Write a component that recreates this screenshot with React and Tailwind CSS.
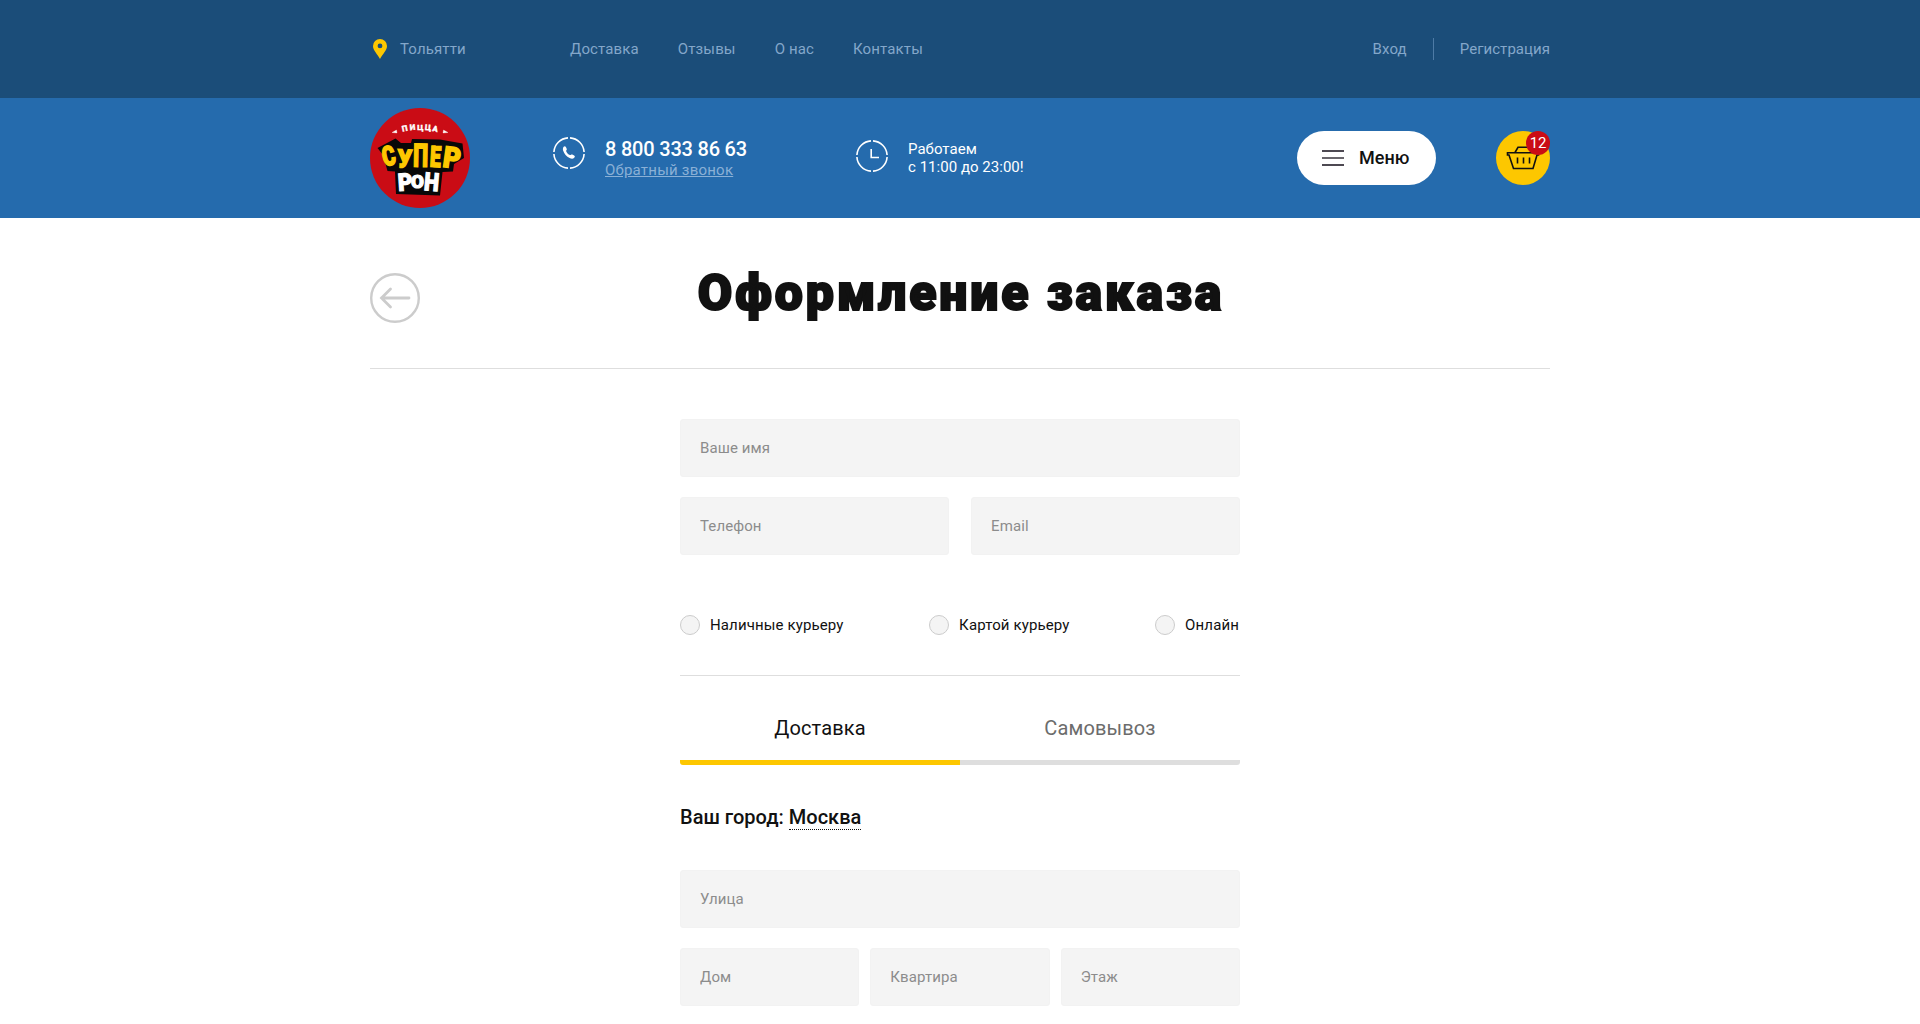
const navLinks = ["Доставка", "Отзывы", "О нас", "Контакты"];
const payments = ["Наличные курьеру", "Картой курьеру", "Онлайн"];

const superLetters = [
  { c: "С", x: 14.5, y: 58.5, s: 27, w: 13, r: -13 },
  { c: "У", x: 27, y: 59, s: 25, w: 14.5, r: 3 },
  { c: "П", x: 43, y: 58.5, s: 32, w: 15, r: 1 },
  { c: "Е", x: 59.5, y: 58.5, s: 29, w: 11, r: 3 },
  { c: "Р", x: 72, y: 58.5, s: 29, w: 17.5, r: 8 },
];

const ronLetters = [
  { c: "Р", x: 28.5, y: 83, s: 24, w: 14.5, r: -4 },
  { c: "О", x: 41, y: 79.5, s: 19, w: 13, r: 0 },
  { c: "Н", x: 53.5, y: 82, s: 25, w: 15, r: 5 },
];

function Letters({ items }) {
  return items.map((l) => (
    <text key={l.c} fontSize={l.s} textLength={l.w} lengthAdjust="spacingAndGlyphs" transform={`translate(${l.x} ${l.y}) rotate(${l.r})`}>
      {l.c}
    </text>
  ));
}

function Logo() {
  return (
    <svg viewBox="0 0 100 100" className="h-[100px] w-[100px] shrink-0" fontFamily="Roboto, sans-serif" fontWeight="900" strokeLinejoin="miter">
      <circle cx="50" cy="50" r="50" fill="#ca0c15" />
      <path
        d="M7.500 40 25.500 30.500 31 35 41 35 42 31 70 31.500 92.500 35.500 94 50 84 56 83 63.500 72.500 64 70 87.500 26 86 25 63.500 17.500 63 13 47Z"
        fill="#080808"
      />
      <g fill="#fff" stroke="#fff" strokeWidth=".3" fontSize="8">
        <text transform="translate(32.500 23.800) rotate(-12)">П</text>
        <text transform="translate(40 22.300) rotate(-5)">И</text>
        <text transform="translate(47.300 21.900)">Ц</text>
        <text transform="translate(54.800 21.900) rotate(5)">Ц</text>
        <text transform="translate(62 22.900) rotate(12)">А</text>
        <path d="m22 24.500 4.500-2.500.5 3Zm56 0-4.500-2.500-.5 3Z" />
      </g>
      <g fill="#fdc700" stroke="#fdc700" strokeWidth="1.6">
        <Letters items={superLetters} />
      </g>
      <g fill="#fff" stroke="#fff" strokeWidth="1.2">
        <Letters items={ronLetters} />
      </g>
    </svg>
  );
}

function Ring({ children, className }) {
  return (
    <svg viewBox="0 0 32 32" fill="none" stroke="#fff" strokeWidth="1.6" className={className}>
      <path d="M17 .9a15.100 15.100 0 0 1 14.100 14.100M31.100 17A15.100 15.100 0 0 1 17 31.100M15 31.100A15.100 15.100 0 0 1 .9 17M.9 15A15.100 15.100 0 0 1 15 .9" />
      {children}
    </svg>
  );
}

function Field({ label }) {
  return (
    <input
      placeholder={label}
      className="block h-[58px] w-full min-w-0 rounded-[3px] border border-[#f2f2f2] bg-[#f4f4f4] px-[19px] text-[15px] tracking-[0.1px] placeholder:text-[#8c8c8c]"
    />
  );
}

export default function App() {
  return (
    <div className="h-[1024px] overflow-hidden bg-white font-[Roboto,sans-serif] text-[15px] leading-[18px] tracking-[0.13px] text-[#111]">
      <div className="h-[98px] bg-[#1b4d79]">
        <div className="mx-auto flex h-full w-[1180px] items-center text-[#84a7ca]">
          <svg viewBox="0 0 14 20" className="ml-[3px] h-5 w-[14px]" fill="#fdc700">
            <path fillRule="evenodd" d="M7 0a7 7 0 0 0-7 7c0 4.500 4.500 8 7 13 2.500-5 7-8.500 7-13a7 7 0 0 0-7-7Zm0 4.500a2.400 2.400 0 1 1 0 4.800 2.400 2.400 0 0 1 0-4.800Z" />
          </svg>
          <span className="ml-[13px] w-[170px]">Тольятти</span>
          <nav className="flex gap-[39px]">
            {navLinks.map((n) => (
              <a key={n}>{n}</a>
            ))}
          </nav>
          <div className="ml-auto flex items-center">
            <a>Вход</a>
            <span className="mr-[26px] ml-[26px] h-[22px] w-px bg-[#4e7ba6]" />
            <a className="tracking-[0.05px]">Регистрация</a>
          </div>
        </div>
      </div>

      <header className="h-[120px] bg-[#256bad]">
        <div className="mx-auto flex h-full w-[1180px] items-center text-white">
          <Logo />
          <Ring className="mb-[10px] ml-[83px] h-8 w-8">
            <path d="M10.700 9.800c.8-1 1.800-.6 2.300.4l.7 1.600c.5 1-.6 1.500-.6 2.100.5 1.900 2.100 3.400 3.900 4.200.8.2 1.300-1 2.300-.5l1.800 1c1 .6 1 1.400.1 2.200-1.200 1.200-2.900 1-4.600.2-3-1.500-5.600-4.300-6.500-7.500-.4-1.500-.2-2.700.6-3.700Z" fill="#fff" stroke="none" />
          </Ring>
          <div className="ml-5 w-[251px]">
            <div className="mb-px text-[20px] leading-[22px] font-medium tracking-[-0.2px]">8 800 333 86 63</div>
            <a className="tracking-[0.22px] text-[#8ab0d6] underline">Обратный звонок</a>
          </div>
          <Ring className="mb-1 h-8 w-8">
            <path d="M15.200 9v8.500H23" />
          </Ring>
          <p className="ml-5 tracking-[0.03px]">
            Работаем
            <br />с 11:00 до 23:00!
          </p>
          <button className="ml-auto flex h-[54px] w-[139px] items-center rounded-full bg-white pl-[25px] text-[18px] font-medium tracking-normal text-[#111]">
            <span className="mr-[15px] flex w-[22px] flex-col gap-[5px]">
              <i className="h-[2px] bg-[#4d4952]" />
              <i className="h-[2px] bg-[#69666c]" />
              <i className="h-[2px] bg-[#4d4952]" />
            </span>
            Меню
          </button>
          <div className="relative ml-[60px] flex h-[54px] w-[54px] items-center justify-center rounded-full bg-[#fdc700]">
            <svg viewBox="0 0 54 54" className="h-[54px] w-[54px]" fill="none" stroke="#111" strokeWidth="1.600">
              <path d="M11.500 21.800H42.500V24H41L37 37.500H17.500L13 24H11.500ZM19 21.500 22 16.300H34L37 21.500M21.500 26.500V32.500M27.500 26.500V32.500M33.500 26.500V32.500" />
            </svg>
            <span className="absolute top-0 right-0 flex h-6 w-6 items-center justify-center rounded-full bg-[#ca0c15] text-[15px] tracking-[-0.3px]">12</span>
          </div>
        </div>
      </header>

      <main className="mx-auto w-[1180px]">
        <div className="flex h-[151px] border-b border-[#dedede] pt-[55px]">
          <svg viewBox="0 0 50 50" className="h-[50px] w-[50px]" fill="none" stroke="#ccc" strokeWidth="2.400">
            <circle cx="25" cy="25" r="23.800" />
            <path d="m20.500 16-9 9 9 9M11.500 25H39" strokeWidth="2.800" strokeLinecap="round" />
          </svg>
          <h1 className="-mt-[10px] mr-[48px] flex-1 text-center text-[50px] leading-[60px] font-black tracking-[2.9px] [-webkit-text-stroke:2px_#111]">Оформление заказа</h1>
        </div>

        <form className="mx-auto mt-[50px] w-[560px]">
          <Field label="Ваше имя" />
          <div className="mt-5 grid grid-cols-2 gap-[22px]">
            <Field label="Телефон" />
            <Field label="Email" />
          </div>
          <div className="mt-[60px] flex justify-between border-b border-[#dedede] pr-px pb-10">
            {payments.map((p) => (
              <label key={p} className="flex h-5 items-center gap-[10px]">
                <span className="h-5 w-5 rounded-full border border-[#ccc] bg-[#f4f4f4]" />
                {p}
              </label>
            ))}
          </div>
          <div className="mt-[40px] grid grid-cols-2 text-center text-[20px] leading-6">
            <div className="h-[49px] rounded-l-[3px] border-b-[5px] border-[#fdc700]">Доставка</div>
            <div className="h-[49px] rounded-r-[3px] border-b-[5px] border-[#dedede] text-[#6c6c6c]">Самовывоз</div>
          </div>
          <p className="mt-10 h-6 text-[20px] leading-6 font-medium tracking-normal">
            Ваш город: <a className="border-b border-dotted border-[#111]">Москва</a>
          </p>
          <div className="mt-[41px]">
            <Field label="Улица" />
          </div>
          <div className="mt-5 grid grid-cols-3 gap-[11px]">
            <Field label="Дом" />
            <Field label="Квартира" />
            <Field label="Этаж" />
          </div>
        </form>
      </main>
    </div>
  );
}
